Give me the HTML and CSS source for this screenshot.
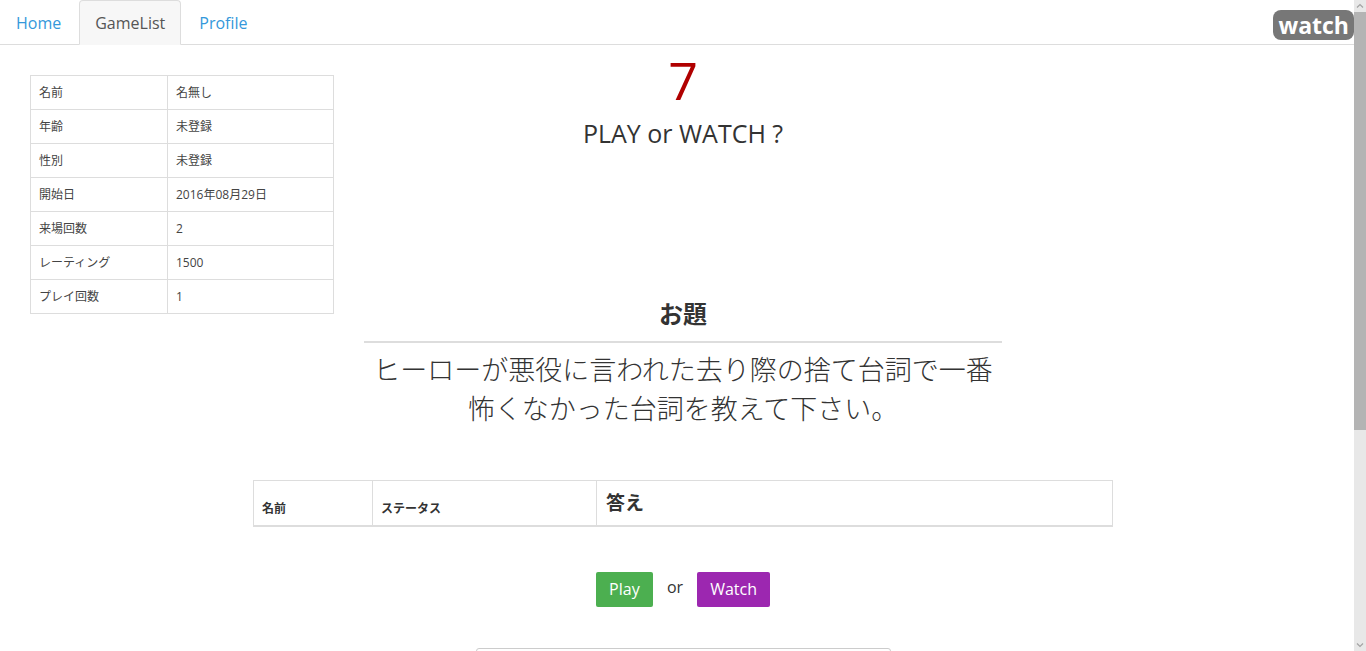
FILE: index.html
```html
<!DOCTYPE html>
<html lang="ja">
<head>
<meta charset="utf-8">
<title>GameList</title>
<link rel="stylesheet" href="styles.css">
</head>
<body>
<nav class="navbar">
  <ul class="tabs">
    <li><a href="#">Home</a></li>
    <li class="active"><a href="#">GameList</a></li>
    <li><a href="#">Profile</a></li>
  </ul>
  <span class="badge">watch</span>
</nav>

<main class="page">
  <div class="top-row">
    <div class="col-left">
      <table class="profile">
        <tr><td class="k">名前</td><td>名無し</td></tr>
        <tr><td class="k">年齢</td><td>未登録</td></tr>
        <tr><td class="k">性別</td><td>未登録</td></tr>
        <tr><td class="k">開始日</td><td>2016年08月29日</td></tr>
        <tr><td class="k">来場回数</td><td>2</td></tr>
        <tr><td class="k">レーティング</td><td>1500</td></tr>
        <tr><td class="k">プレイ回数</td><td>1</td></tr>
      </table>
    </div>
    <div class="col-center">
      <div class="timer">7</div>
      <div class="question">PLAY or WATCH ?</div>
      <h3 class="theme-title">お題</h3>
      <hr class="theme-rule">
      <p class="theme-text">ヒーローが悪役に言われた去り際の捨て台詞で一番怖くなかった台詞を教えて下さい。</p>
    </div>
    <div class="col-right"></div>
  </div>

  <div class="answer-row">
    <table class="answers">
      <thead>
        <tr>
          <th class="c-name">名前</th>
          <th class="c-status">ステータス</th>
          <th class="c-answer">答え</th>
        </tr>
      </thead>
    </table>
  </div>

  <div class="actions">
    <button class="btn btn-play">Play</button>
    <span class="or">or</span>
    <button class="btn btn-watch">Watch</button>
  </div>

  <div class="input-row">
    <input class="answer-input" type="text">
  </div>
</main>

<div class="scrollbar" aria-hidden="true">
  <svg class="arrow" width="12" height="12" viewBox="0 0 12 12"><path d="M3 7.5 L6 4.5 L9 7.5" fill="none" stroke="#a3a3a3" stroke-width="1.2"/></svg>
  <div class="thumb"></div>
  <div class="track"></div>
  <svg class="arrow" width="12" height="12" viewBox="0 0 12 12"><path d="M3 4.5 L6 7.5 L9 4.5" fill="none" stroke="#a3a3a3" stroke-width="1.2"/></svg>
</div>
</body>
</html>
```

FILE: styles.css
```css
* { box-sizing: border-box; }

html, body {
  margin: 0;
  padding: 0;
  background: #fff;
}

body {
  font-family: "Open Sans", "Noto Sans CJK JP", sans-serif;
  color: #333;
  font-size: 14px;
  line-height: 1.42857;
}

/* ---------- nav ---------- */
.navbar {
  display: flex;
  align-items: flex-start;
  justify-content: space-between;
  border-bottom: 1px solid #ddd;
  height: 45px;
}

.tabs {
  list-style: none;
  margin: 0;
  padding: 0;
  display: flex;
}

.tabs li {
  margin-right: 2px;
}

.tabs a {
  display: block;
  padding: 11px 15px 9px;
  line-height: 22px;
  font-size: 16px;
  color: #3498db;
  text-decoration: none;
  border: 1px solid transparent;
  border-radius: 4px 4px 0 0;
}

.tabs .active a {
  color: #555;
  background: #f7f7f7;
  border-color: #ddd;
  border-bottom-color: #f7f7f7;
  height: 45px;
}

.badge {
  margin: 10px 12px 0 0;
  background: #777;
  color: #fff;
  font-weight: 700;
  font-size: 23px;
  line-height: 30px;
  height: 30px;
  padding: 0 5px;
  border-radius: 8px;
}

/* ---------- main ---------- */
.page {
  padding: 0 15px;
}

.top-row {
  display: flex;
}

.col-left,
.col-right {
  flex: 0 0 25%;
  padding: 30px 15px 0;
}

.col-center {
  flex: 0 0 50%;
  padding: 0 15px;
  text-align: center;
}

.profile {
  width: 100%;
  border-collapse: collapse;
  border: 1px solid #ddd;
  font-size: 12px;
  line-height: 17px;
  color: #444;
}

.profile td {
  border: 1px solid #ddd;
  padding: 8px;
  vertical-align: top;
}

.profile td.k {
  width: 137px;
}

.timer {
  color: #b00000;
  font-size: 52px;
  line-height: 57px;
  margin-top: 6px;
}

.question {
  font-size: 25px;
  line-height: 32px;
  margin-top: 9px;
}

.theme-title {
  font-size: 24px;
  font-weight: 700;
  line-height: 32px;
  margin: 149px 0 0;
}

.theme-rule {
  border: 0;
  border-top: 2px solid #ddd;
  margin: 11px 0 0;
}

.theme-text {
  margin: 7px 0 0;
  font-size: 27px;
  font-weight: 300;
  line-height: 39px;
}

/* ---------- answers ---------- */
.answer-row {
  margin-top: 52px;
  padding: 0 238px;
}

.answers {
  width: 100%;
  border-collapse: collapse;
  border: 1px solid #ddd;
}

.answers th {
  border: 1px solid #ddd;
  border-bottom: 2px solid #ddd;
  padding: 8px;
  text-align: left;
  vertical-align: bottom;
  font-weight: 700;
  font-size: 12px;
  line-height: 17px;
}

.answers th.c-name { width: 119px; }
.answers th.c-status { width: 224px; }
.answers th.c-answer {
  font-size: 19px;
  line-height: 28px;
  padding-left: 9px;
}

/* ---------- actions ---------- */
.actions {
  display: flex;
  justify-content: center;
  align-items: center;
  gap: 14px;
  margin-top: 45px;
}

.btn {
  font-family: "Open Sans", sans-serif;
  font-size: 16px;
  line-height: 23px;
  padding: 6px 12px;
  height: 35px;
  border: 0;
  border-radius: 2px;
  color: #fff;
}

.btn-play { background: #4caf50; width: 57px; }
.btn-watch { background: #9c27b0; width: 73px; }

.or {
  font-size: 16px;
  margin-top: -4px;
}

.input-row {
  display: flex;
  justify-content: center;
  margin-top: 41px;
}

.answer-input {
  width: 415px;
  height: 34px;
  border: 1px solid #ccc;
  border-radius: 3px;
}

/* ---------- fake overlay scrollbar ---------- */
.scrollbar {
  position: fixed;
  top: 0;
  right: 0;
  width: 12px;
  height: 100%;
  background: #e8e8e8;
  display: flex;
  flex-direction: column;
}

.scrollbar .arrow {
  flex: 0 0 12px;
  display: block;
}

.scrollbar .thumb {
  height: 418px;
  background: #b4b4b4;
}

.scrollbar .track {
  flex: 1;
}
```
